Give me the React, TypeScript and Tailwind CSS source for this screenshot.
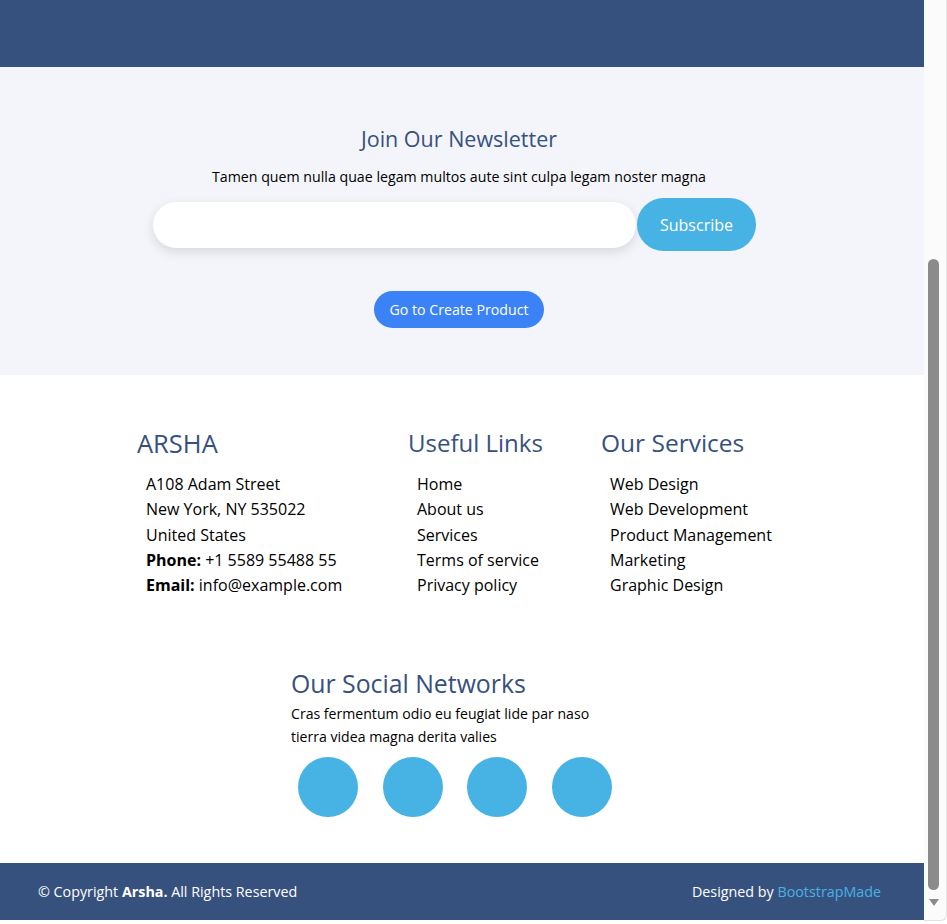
import React from 'react';

const LINKS = ['Home', 'About us', 'Services', 'Terms of service', 'Privacy policy'];
const SERVICES = ['Web Design', 'Web Development', 'Product Management', 'Marketing', 'Graphic Design'];

const font = { fontFamily: '"Open Sans", "Noto Sans", sans-serif' };

export default function App() {
  return (
    <div className="flex w-[947px] h-[924px] overflow-hidden bg-white" style={font}>
      <div className="w-[924px] flex flex-col">
        {/* header strip */}
        <div className="h-[67px] bg-[#37517e]" />

        {/* newsletter */}
        <section className="bg-[#f3f5fa] pt-[56px] pb-[47px] flex flex-col">
          <h4 className="h-[32px] leading-[32px] text-[21.5px] text-[#37517e] text-center mr-[6px]">Join Our Newsletter</h4>
          <p className="mt-[11px] leading-[22px] text-[14.2px] text-black text-center mr-[6px]">
            Tamen quem nulla quae legam multos aute sint culpa legam noster magna
          </p>
          <form className="mt-[10px] flex items-center pl-[153px]" onSubmit={e => e.preventDefault()}>
            <input
              type="email"
              className="w-[483px] h-[46px] rounded-full bg-white shadow-[0_4px_12px_rgba(0,0,0,0.12)] outline-none px-5"
            />
            <button type="submit" className="ml-[1px] w-[119px] h-[53px] rounded-full bg-[#47b2e4] text-white text-[16px] leading-[50px]">
              Subscribe
            </button>
          </form>
          <div className="mt-[40px] flex justify-center mr-[6px]">
            <button className="w-[170px] h-[37px] rounded-full bg-[#3b82f6] text-white text-[14.2px]">Go to Create Product</button>
          </div>
        </section>

        {/* footer top */}
        <section className="h-[488px] pt-[52px] bg-white">
          <div className="grid grid-cols-[271px_193px_1fr] pl-[137px]">
            <div>
              <h3 className="h-[32px] leading-[32px] text-[25.5px] text-[#37517e]">ARSHA</h3>
              <div className="mt-[13px] pl-[9px] text-[16px] leading-[25.25px] text-black">
                <p>A108 Adam Street</p>
                <p>New York, NY 535022</p>
                <p>United States</p>
                <p><strong>Phone:</strong> +1 5589 55488 55</p>
                <p><strong>Email:</strong> info@example.com</p>
              </div>
            </div>
            <div>
              <h4 className="h-[32px] leading-[32px] text-[24px] text-[#37517e]">Useful Links</h4>
              <ul className="mt-[13px] pl-[9px] text-[16px] leading-[25.25px] text-black">
                {LINKS.map(l => <li key={l}><a href="#">{l}</a></li>)}
              </ul>
            </div>
            <div>
              <h4 className="h-[32px] leading-[32px] text-[24.5px] text-[#37517e]">Our Services</h4>
              <ul className="mt-[13px] pl-[9px] text-[16px] leading-[25.25px] text-black">
                {SERVICES.map(s => <li key={s}><a href="#">{s}</a></li>)}
              </ul>
            </div>
          </div>

          <div className="mt-[69px] pl-[291px]">
            <h4 className="h-[32px] leading-[32px] text-[24.8px] text-[#37517e]">Our Social Networks</h4>
            <p className="mt-[3px] text-[14.1px] leading-[23px] text-black">
              Cras fermentum odio eu feugiat lide par naso<br />tierra videa magna derita valies
            </p>
            <div className="mt-[9px] pl-[7px] flex gap-[24.5px]">
              {[0, 1, 2, 3].map(i => (
                <a key={i} href="#" className="w-[60px] h-[60px] rounded-full bg-[#47b2e4]" />
              ))}
            </div>
          </div>
        </section>

        {/* footer bottom */}
        <div className="h-[57px] bg-[#37517e] flex items-center justify-between pl-[38px] pr-[43px] text-white text-[14.3px]">
          <div>© Copyright <strong>Arsha.</strong> All Rights Reserved</div>
          <div>Designed by <a href="#" className="text-[#47b2e4]">BootstrapMade</a></div>
        </div>
      </div>

      {/* scrollbar */}
      <div className="w-[23px] h-[921px] bg-[#fbfbfb] border-r border-b border-[#e2e2e2] rounded-br-[6px] flex flex-col items-start pl-[4px]">
        <div className="mt-[259px] w-[11px] h-[631px] rounded-full bg-[#8b8b8b]" />
        <div className="mt-[9px] ml-[1px] w-0 h-0 border-l-[5px] border-r-[5px] border-t-[7px] border-l-transparent border-r-transparent border-t-[#8b8b8b]" />
      </div>
    </div>
  );
}
